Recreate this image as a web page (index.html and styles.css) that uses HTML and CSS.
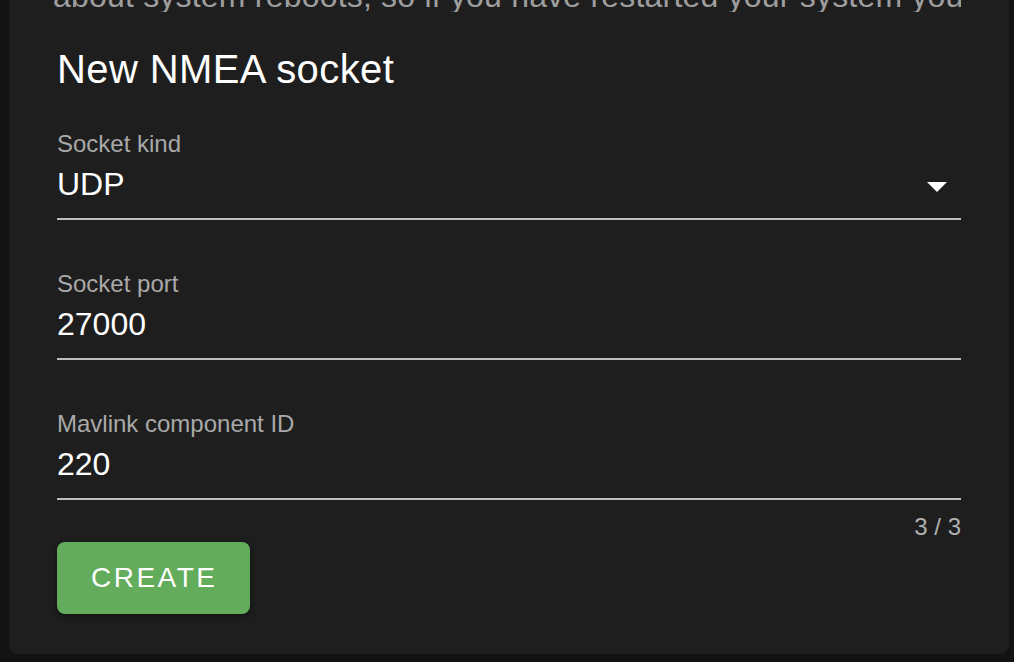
FILE: index.html
```html
<!DOCTYPE html>
<html lang="en">
<head>
<meta charset="utf-8">
<title>New NMEA socket</title>
<link rel="stylesheet" href="styles.css">
</head>
<body>
<div class="page">
  <div class="card">
    <div class="prev"><p class="prev-text">about system reboots, so if you have restarted your system you</p></div>
    <h2 class="title">New NMEA socket</h2>
    <div class="field">
      <div class="label">Socket kind</div>
      <div class="control">
        <div class="value">UDP</div>
        <svg class="arrow" width="20" height="10" viewBox="0 0 20 10"><path d="M0 0 L20 0 L10 10 Z" fill="#ffffff"/></svg>
      </div>
    </div>
    <div class="field">
      <div class="label">Socket port</div>
      <div class="control">
        <div class="value">27000</div>
      </div>
    </div>
    <div class="field last">
      <div class="label">Mavlink component ID</div>
      <div class="control">
        <div class="value">220</div>
      </div>
    </div>
    <div class="counter">3 / 3</div>
    <div class="actions">
      <button class="btn">Create</button>
    </div>
  </div>
</div>
</body>
</html>
```

FILE: styles.css
```css
html, body {
  margin: 0;
  padding: 0;
  background: #131313;
  height: 100%;
  overflow: hidden;
}
.page {
  padding: 0 5px 0 9px;
  font-family: "Liberation Sans", Arial, sans-serif;
}
.card {
  background: #1e1e1e;
  border-radius: 0 0 9px 9px;
  padding: 0 48px 40px 48px;
  display: flex;
  flex-direction: column;
}
.prev {
  height: 12px;
  overflow: hidden;
  display: flex;
  align-items: flex-end;
  margin-left: -4px;
}
.prev-text {
  margin: 0;
  font-size: 32px;
  line-height: 32px;
  letter-spacing: 0.2px;
  color: #9e9e9e;
  white-space: nowrap;
}
.title {
  margin: 25px 0 31px 0;
  font-weight: normal;
  font-size: 40px;
  line-height: 64px;
  letter-spacing: 0.4px;
  color: #ffffff;
}
.field {
  margin-bottom: 52px;
}
.field.last {
  margin-bottom: 15px;
}
.label {
  font-size: 24px;
  line-height: 24px;
  color: #a9a9a9;
  margin-bottom: 8px;
}
.control {
  display: flex;
  align-items: center;
  padding-bottom: 14px;
  border-bottom: 2px solid #bdbdbd;
}
.value {
  flex: 1;
  font-size: 32px;
  line-height: 40px;
  color: #ffffff;
}
.arrow {
  margin-top: 6px;
  margin-right: 14px;
}
.counter {
  text-align: right;
  font-size: 24px;
  line-height: 24px;
  color: #b0b0b0;
  margin-bottom: 3px;
}
.actions {
  display: flex;
}
.btn {
  height: 72px;
  padding: 0 32px 0 34px;
  border: none;
  border-radius: 8px;
  background: #62ac5b;
  color: #ffffff;
  font-family: "Liberation Sans", Arial, sans-serif;
  font-size: 28px;
  letter-spacing: 2.5px;
  text-transform: uppercase;
  box-shadow: 0 3px 2px -2px rgba(0,0,0,0.3), 0 2px 4px 0 rgba(0,0,0,0.2), 0 2px 10px 0 rgba(0,0,0,0.15);
}
```
